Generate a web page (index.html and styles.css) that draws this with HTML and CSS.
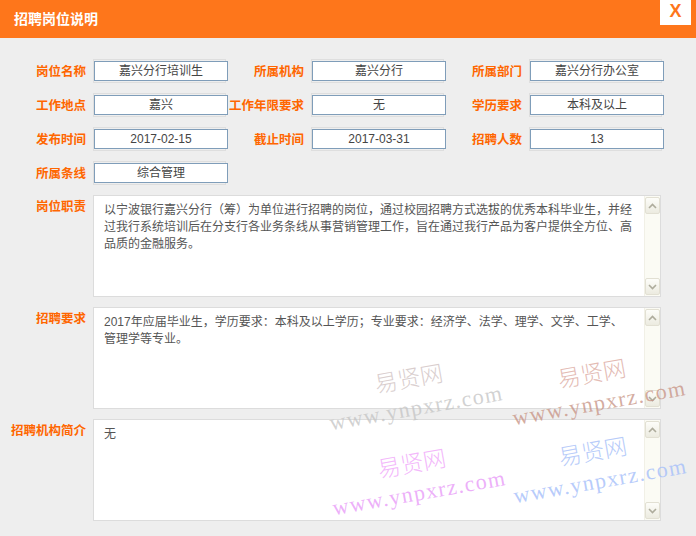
FILE: index.html
```html
<!DOCTYPE html>
<html lang="zh-CN">
<head>
<meta charset="utf-8">
<title>招聘岗位说明</title>
<link rel="stylesheet" href="styles.css">
</head>
<body>
<div class="page">
  <div class="header">
    <span class="title">招聘岗位说明</span>
    <span class="close">X</span>
  </div>
  <div class="form">
    <div class="grid">
      <div class="field"><span class="label">岗位名称</span><div class="frame"><div class="box">嘉兴分行培训生</div></div></div>
      <div class="field"><span class="label">所属机构</span><div class="frame"><div class="box">嘉兴分行</div></div></div>
      <div class="field"><span class="label">所属部门</span><div class="frame"><div class="box">嘉兴分行办公室</div></div></div>
      <div class="field"><span class="label">工作地点</span><div class="frame"><div class="box">嘉兴</div></div></div>
      <div class="field"><span class="label">工作年限要求</span><div class="frame"><div class="box">无</div></div></div>
      <div class="field"><span class="label">学历要求</span><div class="frame"><div class="box">本科及以上</div></div></div>
      <div class="field"><span class="label">发布时间</span><div class="frame"><div class="box">2017-02-15</div></div></div>
      <div class="field"><span class="label">截止时间</span><div class="frame"><div class="box">2017-03-31</div></div></div>
      <div class="field"><span class="label">招聘人数</span><div class="frame"><div class="box">13</div></div></div>
      <div class="field"><span class="label">所属条线</span><div class="frame"><div class="box">综合管理</div></div></div>
    </div>

    <div class="area-row">
      <span class="label">岗位职责</span>
      <div class="area">
        <div class="area-text">以宁波银行嘉兴分行（筹）为单位进行招聘的岗位，通过校园招聘方式选拔的优秀本科毕业生，并经过我行系统培训后在分支行各业务条线从事营销管理工作，旨在通过我行产品为客户提供全方位、高品质的金融服务。</div>
        <div class="sb">
          <span class="sb-btn"><svg width="9" height="6" viewBox="0 0 9 6"><path d="M1 5 L4.5 1.5 L8 5" fill="none" stroke="#aeac9c" stroke-width="1.6"/></svg></span>
          <span class="sb-btn"><svg width="9" height="6" viewBox="0 0 9 6"><path d="M1 1 L4.5 4.5 L8 1" fill="none" stroke="#aeac9c" stroke-width="1.6"/></svg></span>
        </div>
      </div>
    </div>

    <div class="area-row">
      <span class="label">招聘要求</span>
      <div class="area">
        <div class="area-text">2017年应届毕业生，学历要求：本科及以上学历；专业要求：经济学、法学、理学、文学、工学、管理学等专业。</div>
        <div class="sb">
          <span class="sb-btn"><svg width="9" height="6" viewBox="0 0 9 6"><path d="M1 5 L4.5 1.5 L8 5" fill="none" stroke="#aeac9c" stroke-width="1.6"/></svg></span>
          <span class="sb-btn"><svg width="9" height="6" viewBox="0 0 9 6"><path d="M1 1 L4.5 4.5 L8 1" fill="none" stroke="#aeac9c" stroke-width="1.6"/></svg></span>
        </div>
      </div>
    </div>

    <div class="area-row">
      <span class="label">招聘机构简介</span>
      <div class="area">
        <div class="area-text">无</div>
        <div class="sb">
          <span class="sb-btn"><svg width="9" height="6" viewBox="0 0 9 6"><path d="M1 5 L4.5 1.5 L8 5" fill="none" stroke="#aeac9c" stroke-width="1.6"/></svg></span>
          <span class="sb-btn"><svg width="9" height="6" viewBox="0 0 9 6"><path d="M1 1 L4.5 4.5 L8 1" fill="none" stroke="#aeac9c" stroke-width="1.6"/></svg></span>
        </div>
      </div>
    </div>
  </div>

  <div class="wm wm-1"><div class="wm-cn">易贤网</div><div class="wm-en">www.ynpxrz.com</div></div>
  <div class="wm wm-2"><div class="wm-cn">易贤网</div><div class="wm-en">www.ynpxrz.com</div></div>
  <div class="wm wm-3"><div class="wm-cn">易贤网</div><div class="wm-en">www.ynpxrz.com</div></div>
  <div class="wm wm-4"><div class="wm-cn">易贤网</div><div class="wm-en">www.ynpxrz.com</div></div>
</div>
</body>
</html>
```

FILE: styles.css
```css
* { box-sizing: border-box; }

html, body {
  margin: 0;
  padding: 0;
  background: #eeeeee;
}

body {
  font-family: "Liberation Sans", "Noto Sans CJK SC", sans-serif;
  font-size: 12px;
  color: #444;
  text-spacing-trim: space-all;
}

.page {
  position: relative;
  width: 696px;
  height: 536px;
  overflow: hidden;
}

.header {
  height: 38px;
  background: #fe761b;
  display: flex;
  justify-content: space-between;
  align-items: flex-start;
  padding-left: 14px;
}

.title {
  color: #fff;
  font-family: "Noto Sans CJK SC", sans-serif;
  font-weight: bold;
  font-size: 14px;
  line-height: 36px;
}

.close {
  width: 31px;
  height: 25px;
  margin-right: 5px;
  background: #fff;
  color: #fe761b;
  font-family: "Liberation Sans", sans-serif;
  font-weight: bold;
  font-size: 18px;
  line-height: 22px;
  text-align: center;
}

.form {
  padding: 21px 0 0 10px;
}

.grid {
  display: grid;
  grid-template-columns: repeat(3, 218px);
  row-gap: 10px;
}

.field {
  display: flex;
  align-items: center;
  height: 24px;
}

.label {
  width: 76px;
  flex: none;
  margin-right: 7px;
  text-align: right;
  white-space: nowrap;
  color: #ff6600;
  font-family: "Noto Sans CJK SC", sans-serif;
  font-weight: bold;
  font-size: 12.5px;
  line-height: 16px;
}

.frame {
  width: 133px;
  height: 24px;
  border: 1px solid #dedede;
}

.box {
  margin-top: 1px;
  width: 134px;
  height: 20px;
  border: 1px solid #7f9db9;
  background: #fff;
  text-align: center;
  line-height: 18px;
  color: #444;
  white-space: nowrap;
}

.area-row {
  display: flex;
  align-items: flex-start;
  margin-top: 10px;
}

.area-row .label {
  padding-top: 3px;
}

.area {
  width: 568px;
  height: 102px;
  border: 1px solid #dcdcdc;
  background: #fff;
  display: flex;
}

.area-text {
  flex: 1;
  padding: 6px 11px 0 10px;
  line-height: 17px;
  color: #555;
}

.sb {
  width: 16px;
  flex: none;
  background: #fbfbf4;
  border-left: 1px solid #f1f0e6;
  display: flex;
  flex-direction: column;
  justify-content: space-between;
  padding: 1px 0;
}

.sb-btn {
  display: flex;
  align-items: center;
  justify-content: center;
  height: 17px;
  border: 1px solid #e2e0d3;
  border-radius: 2px;
  background: linear-gradient(#fdfdf9, #ecebe0);
}

/* watermark overlay */
.wm {
  position: absolute;
  width: 180px;
  transform: rotate(-10deg);
  pointer-events: none;
}

.wm-cn {
  padding-left: 51px;
  font-family: "Noto Sans CJK SC", sans-serif;
  font-weight: 300;
  font-size: 23px;
  line-height: 40px;
  white-space: nowrap;
}

.wm-en {
  font-family: "Liberation Serif", serif;
  font-size: 22px;
  letter-spacing: 1.4px;
  line-height: 24px;
  white-space: nowrap;
}

.wm-1 { left: 325px; top: 356px; }
.wm-1 .wm-cn { color: rgba(205, 190, 190, 0.75); }
.wm-1 .wm-en { color: rgba(195, 195, 195, 0.75); }

.wm-2 { left: 508px; top: 351px; }
.wm-2 .wm-cn { color: rgba(218, 165, 155, 0.75); }
.wm-2 .wm-en { color: rgba(198, 145, 130, 0.75); }

.wm-3 { left: 328px; top: 441px; }
.wm-3 .wm-cn { color: rgba(240, 165, 250, 0.8); }
.wm-3 .wm-en { color: rgba(232, 155, 248, 0.8); }

.wm-4 { left: 509px; top: 429px; }
.wm-4 .wm-cn { color: rgba(165, 190, 248, 0.8); }
.wm-4 .wm-en { color: rgba(165, 190, 250, 0.8); }
```
